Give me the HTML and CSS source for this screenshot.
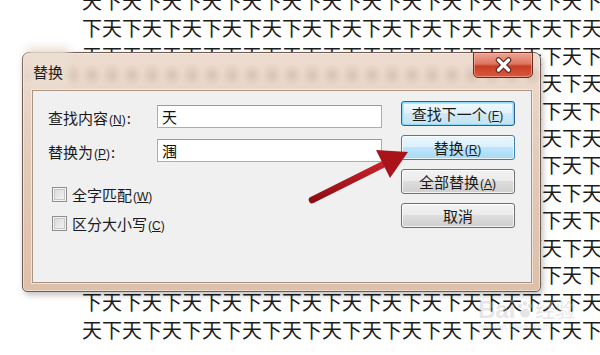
FILE: index.html
```html
<!DOCTYPE html>
<html lang="zh-CN">
<head>
    <meta charset="UTF-8">
    <meta name="viewport" content="width=device-width, initial-scale=1.0">
    <title>替换</title>
    <link rel="stylesheet" href="styles.css">
</head>
<body>
    <!-- Document text behind the dialog -->
    <div class="doc">
        <div class="line">天下天下天下天下天下天下天下天下天下天下天下天下天下天</div>
        <div class="line">下天下天下天下天下天下天下天下天下天下天下天下天下天下</div>
        <div class="line">天下天下天下天下天下天下天下天下天下天下天下天下天下天</div>
        <div class="line">下天下天下天下天下天下天下天下天下天下天下天下天下天下</div>
        <div class="line">天下天下天下天下天下天下天下天下天下天下天下天下天下天</div>
        <div class="line">下天下天下天下天下天下天下天下天下天下天下天下天下天下</div>
        <div class="line">天下天下天下天下天下天下天下天下天下天下天下天下天下天</div>
        <div class="line">下天下天下天下天下天下天下天下天下天下天下天下天下天下</div>
        <div class="line">天下天下天下天下天下天下天下天下天下天下天下天下天下天</div>
        <div class="line">下天下天下天下天下天下天下天下天下天下天下天下天下天下</div>
        <div class="line">天下天下天下天下天下天下天下天下天下天下天下天下天下天</div>
        <div class="line">下天下天下天下天下天下天下天下天下天下天下天下天下天下</div>
        <div class="line">天下天下天下天下天下天下天下天下天下天下天下天下天下天</div>
    </div>

    <!-- Replace dialog -->
    <div class="dialog">
        <div class="title-bar">
            <span class="title">替换</span>
            <button class="close-btn">
                <svg width="17" height="16" viewBox="0 0 17 16">
                    <path d="M3.5 3 L13.5 13 M13.5 3 L3.5 13" stroke="#5a2a22" stroke-width="5.5" stroke-linecap="round"/>
                    <path d="M3.5 3 L13.5 13 M13.5 3 L3.5 13" stroke="#fff" stroke-width="3.2" stroke-linecap="round"/>
                </svg>
            </button>
        </div>

        <div class="panel">
            <div class="form">
                <div class="field">
                    <label for="find-input">查找内容<span class="key">(<u>N</u>)</span>:</label>
                    <input type="text" id="find-input" value="天">
                </div>
                <div class="field field-second">
                    <label for="replace-input">替换为<span class="key">(<u>P</u>)</span>:</label>
                    <input type="text" id="replace-input" value="涠">
                </div>
                <div class="check check-first">
                    <span class="box"></span>
                    <span>全字匹配<span class="key">(<u>W</u>)</span></span>
                </div>
                <div class="check">
                    <span class="box"></span>
                    <span>区分大小写<span class="key">(<u>C</u>)</span></span>
                </div>
            </div>

            <div class="buttons">
                <button class="btn btn-default">查找下一个<span class="key">(<u>F</u>)</span></button>
                <button class="btn btn-hover">替换<span class="key">(<u>R</u>)</span></button>
                <button class="btn">全部替换<span class="key">(<u>A</u>)</span></button>
                <button class="btn">取消</button>
            </div>
        </div>
    </div>

    <!-- Red pointer arrow -->
    <svg class="arrow" width="120" height="70" viewBox="0 0 120 70">
        <defs>
            <linearGradient id="arrow-fill" x1="0" y1="0" x2="0" y2="1">
                <stop offset="0" stop-color="#c8232a"/>
                <stop offset="1" stop-color="#8f0d12"/>
            </linearGradient>
        </defs>
        <line x1="12" y1="60" x2="86" y2="23" stroke="url(#arrow-fill)" stroke-width="6.5" stroke-linecap="round"/>
        <polygon points="108,12 76,10 90,38" fill="#a8141a"/>
    </svg>

    <!-- Watermark -->
    <div class="watermark">
        <span class="wm-brand">Bai</span>
        <svg width="20" height="20" viewBox="0 0 20 20">
            <circle cx="5" cy="6" r="2.2" fill="currentColor"/>
            <circle cx="10" cy="3.5" r="2.2" fill="currentColor"/>
            <circle cx="15" cy="6" r="2.2" fill="currentColor"/>
            <ellipse cx="10" cy="13" rx="5" ry="4.5" fill="currentColor"/>
        </svg>
        <span class="wm-name">经验</span>
        <div class="wm-url">jingyan.baidu.com</div>
    </div>
</body>
</html>
```

FILE: styles.css
```css
body {
    margin: 0;
    width: 600px;
    height: 355px;
    overflow: hidden;
    position: relative;
    background-color: #fff;
    font-family: "Noto Sans CJK SC", sans-serif;
}

/* Document text */
.doc {
    margin-top: -13px;
    padding-left: 82px;
    font-size: 20px;
    line-height: 27.4px;
    color: #1c1c1c;
    white-space: nowrap;
    overflow: hidden;
}

/* Dialog window */
.dialog {
    position: absolute;
    left: 22px;
    top: 52px;
    width: 519px;
    height: 240px;
    box-sizing: border-box;
    border: 1px solid #6c5c53;
    border-radius: 7px 7px 5px 5px;
    background: linear-gradient(#ecdccf, #e3cbb9 45%, #dcc0a9);
    box-shadow: inset 0 0 0 1px rgba(255, 255, 255, 0.45), 2px 3px 6px rgba(0, 0, 0, 0.25);
    display: flex;
    flex-direction: column;
}

.title-bar {
    height: 37px;
    display: flex;
    justify-content: space-between;
    align-items: flex-start;
    padding: 0 7px 0 10px;
    background-image: radial-gradient(ellipse 10px 11px at 50% 50%, rgba(150, 120, 100, 0.22), rgba(150, 120, 100, 0));
    background-size: 20px 24px;
    background-position: 59px 10px;
    background-repeat: repeat-x;
}

.title {
    padding-top: 9px;
    font-size: 15px;
    line-height: 20px;
    color: #1e1e1e;
    background-color: rgba(236, 222, 210, 0.9);
    box-shadow: 0 0 8px 6px rgba(236, 222, 210, 0.9);
}

.close-btn {
    margin-top: -1px;
    width: 60px;
    height: 26px;
    padding: 0;
    border: 1px solid #6a2a20;
    border-radius: 0 0 5px 5px;
    background: linear-gradient(#eba595, #de7560 45%, #c83c26 55%, #d85a3e);
    box-shadow: inset 0 0 0 1px rgba(255, 200, 185, 0.5);
    display: flex;
    align-items: center;
    justify-content: center;
}

/* Content panel */
.panel {
    flex: 1;
    margin: 0 8px 8px 9px;
    padding: 10px 16px 0 15px;
    background-color: #f0f0f1;
    border: 1px solid #a99383;
    box-shadow: 0 0 0 1px rgba(250, 240, 232, 0.7);
    display: flex;
    font-size: 15px;
    color: #1a1a1a;
}

.key {
    font-family: "Liberation Sans", sans-serif;
    font-size: 12px;
    margin: 0 1px;
}

.form {
    width: 334px;
    padding-top: 4px;
}

.field {
    display: grid;
    grid-template-columns: 109px 225px;
    align-items: center;
    height: 23px;
}

.field label {
    padding-top: 2px;
}

.field-second {
    margin-top: 11px;
}

.field input {
    box-sizing: border-box;
    height: 23px;
    margin: 0;
    padding: 0 4px;
    border: 1px solid #abadb3;
    border-top-color: #979aa3;
    background-color: #fff;
    font-family: "Noto Sans CJK SC", sans-serif;
    font-size: 15px;
    color: #111;
}

.check {
    display: flex;
    align-items: center;
    gap: 5px;
    height: 15px;
    margin-top: 14px;
    padding-left: 4px;
}

.check-first {
    margin-top: 25px;
}

.box {
    box-sizing: border-box;
    width: 15px;
    height: 15px;
    border: 1px solid #8e8f8f;
    background: linear-gradient(135deg, #d8d8d8, #f6f6f6);
    box-shadow: inset 0 0 0 1px #f4f4f4, inset 0 0 0 2px #c8c8c8;
}

/* Buttons */
.buttons {
    margin-left: 19px;
    width: 114px;
    display: flex;
    flex-direction: column;
    gap: 9px;
}

.btn {
    height: 25px;
    padding: 0;
    border: 1px solid #707070;
    border-radius: 3px;
    background: linear-gradient(#f2f2f2, #ebebeb 50%, #dddddd 50%, #cfcfcf);
    box-shadow: inset 0 0 0 1px rgba(255, 255, 255, 0.75);
    font-family: "Noto Sans CJK SC", sans-serif;
    font-size: 15px;
    color: #1a1a1a;
}

.btn-default {
    border-color: #2c628b;
    background: linear-gradient(#f2f9fd, #e1f1fa 50%, #cfe9f7 50%, #c4e3f4);
    box-shadow: inset 0 0 0 1px #8cdaf7, inset 0 0 0 2px #b6e8fa;
}

.btn-hover {
    border-color: #3c7fb1;
    background: linear-gradient(#eaf6fd, #d9f0fc 50%, #bee6fd 50%, #a7d9f5);
}

/* Annotation arrow */
.arrow {
    position: absolute;
    left: 300px;
    top: 140px;
}

/* Watermark */
.watermark {
    position: absolute;
    left: 478px;
    top: 298px;
    display: flex;
    align-items: center;
    flex-wrap: wrap;
    width: 120px;
    color: rgba(190, 190, 190, 0.4);
}

.wm-brand {
    font-family: "Liberation Sans", sans-serif;
    font-size: 24px;
    font-weight: bold;
    line-height: 24px;
}

.wm-name {
    font-size: 20px;
    line-height: 24px;
}

.wm-url {
    width: 100%;
    font-family: "Liberation Sans", sans-serif;
    font-size: 9px;
    line-height: 10px;
}
```
